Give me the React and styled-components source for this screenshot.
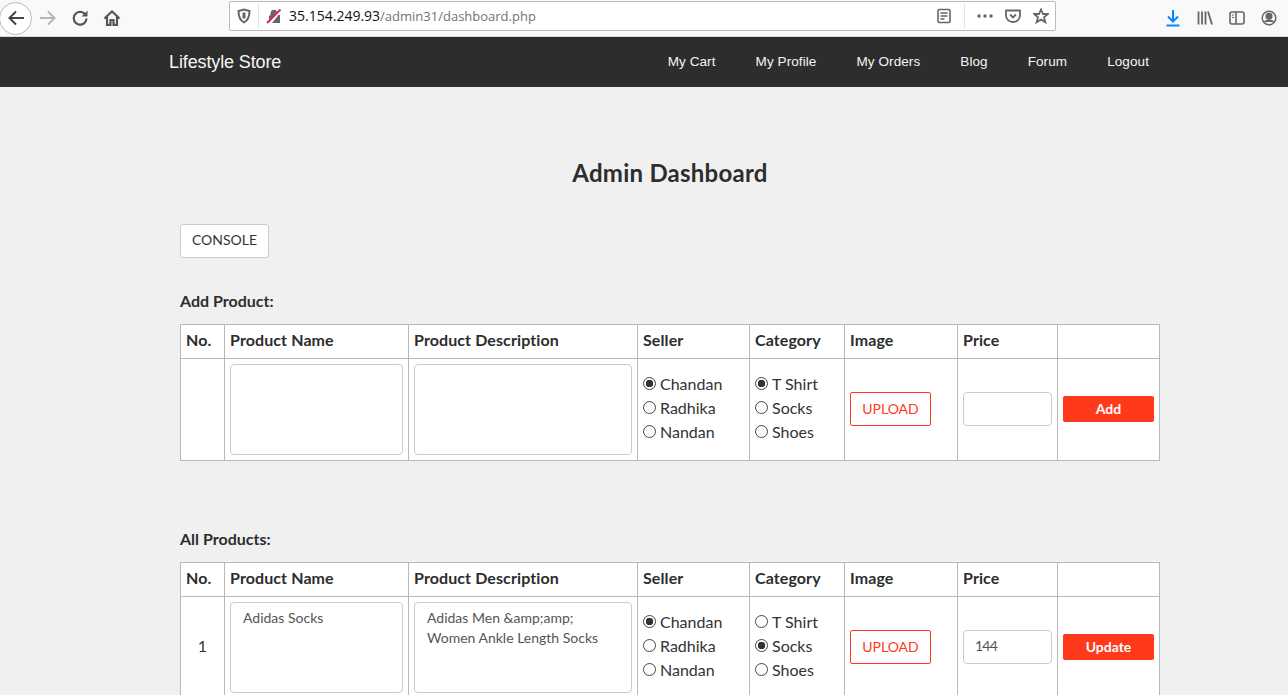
import React from 'react'
import styled, { createGlobalStyle } from 'styled-components'

const GlobalStyle = createGlobalStyle`
    html, body {
        margin: 0;
        height: 100%;
        overflow: hidden;
        background: #f0f0f0;
        font-family: Lato, "Liberation Sans", sans-serif;
        color: #333;
    }
`

const columns = [44, 184, 229, 112, 95, 113, 100, 102]
const headings = ['No.', 'Product Name', 'Product Description', 'Seller', 'Category', 'Image', 'Price', '']
const sellers = ['Chandan', 'Radhika', 'Nandan']
const categories = ['T Shirt', 'Socks', 'Shoes']

const RadioGroup = ({ name, options, selected }) => (
    <Radios>
        {options.map((option) => (
            <RadioRow key={option}>
                <Radio type="radio" name={name} defaultChecked={option === selected} />
                {option}
            </RadioRow>
        ))}
    </Radios>
)

const ProductTable = ({ id, no, name, description, seller, category, price, action }) => (
    <Table>
        <colgroup>
            {columns.map((width, index) => <col key={index} width={width} />)}
        </colgroup>
        <thead>
            <tr>
                {headings.map((heading, index) => <Th key={index}>{heading}</Th>)}
            </tr>
        </thead>
        <tbody>
            <tr>
                <NoCell>{no}</NoCell>
                <Td><TextBox defaultValue={name} /></Td>
                <Td><TextBox defaultValue={description} /></Td>
                <ControlCell><RadioGroup name={id + '-seller'} options={sellers} selected={seller} /></ControlCell>
                <ControlCell><RadioGroup name={id + '-category'} options={categories} selected={category} /></ControlCell>
                <ControlCell><UploadButton>UPLOAD</UploadButton></ControlCell>
                <ControlCell><PriceInput type="text" defaultValue={price} /></ControlCell>
                <ControlCell><ActionButton>{action}</ActionButton></ControlCell>
            </tr>
        </tbody>
    </Table>
)

const App = () => {
    return (
        <>
            <GlobalStyle />
            <BrowserBar>
                <NavIcons>
                    <BackCircle>
                        <svg width="18" height="18" viewBox="0 0 18 18" fill="none" stroke="#444" strokeWidth="2">
                            <path d="M17 9H2.5M9 2.5L2.5 9L9 15.5" />
                        </svg>
                    </BackCircle>
                    <IconSlot>
                        <svg width="18" height="18" viewBox="0 0 18 18" fill="none" stroke="#b5b5b5" strokeWidth="2">
                            <path d="M1 9h14.5M9 2.5L15.5 9L9 15.5" />
                        </svg>
                    </IconSlot>
                    <IconSlot>
                        <svg width="18" height="18" viewBox="0 0 18 18" fill="none" stroke="#555" strokeWidth="2.2">
                            <path d="M15.5 9.5A6.4 6.4 0 1 1 13 4.2L15 6.3" />
                            <path d="M16.5 1.5V7.5H10.5" fill="#555" stroke="none" />
                        </svg>
                    </IconSlot>
                    <IconSlot>
                        <svg width="18" height="18" viewBox="0 0 18 18" fill="none" stroke="#555" strokeWidth="2.2">
                            <path d="M1.5 9.5L9 2.5L16.5 9.5M4 7.5V15.8H7.5V11H10.5V15.8H14V7.5" />
                        </svg>
                    </IconSlot>
                </NavIcons>
                <UrlBar>
                    <svg width="16" height="16" viewBox="0 0 16 16" fill="none" stroke="#666" strokeWidth="2">
                        <path d="M2.5 3L8 1.5L13.5 3C13.5 8 12.5 12 8 14.5C3.5 12 2.5 8 2.5 3Z" />
                        <path d="M8 4.5V10.5" strokeWidth="3" />
                    </svg>
                    <UrlDivider />
                    <svg width="16" height="16" viewBox="0 0 16 16">
                        <path d="M3 15V7.5H4.5V5a3.5 3.5 0 0 1 6.5-1.5L3 15ZM14 7V15H6L12.5 7Z" fill="#666" />
                        <path d="M1 15L14.5 1.5" stroke="#e22850" strokeWidth="2" />
                    </svg>
                    <UrlText>35.154.249.93<UrlPath>/admin31/dashboard.php</UrlPath></UrlText>
                    <UrlActions>
                        <svg width="16" height="16" viewBox="0 0 16 16" fill="none" stroke="#666" strokeWidth="1.6">
                            <rect x="2" y="1.5" width="12" height="13" rx="1.5" />
                            <path d="M4.5 5h7M4.5 8h7M4.5 11h4" />
                        </svg>
                        <ActionDivider />
                        <Dots>
                            <svg width="16" height="4" viewBox="0 0 16 4" fill="#666">
                                <circle cx="2" cy="2" r="1.7" /><circle cx="8" cy="2" r="1.7" /><circle cx="14" cy="2" r="1.7" />
                            </svg>
                        </Dots>
                        <svg width="16" height="16" viewBox="0 0 16 16" fill="none" stroke="#666" strokeWidth="1.8">
                            <path d="M1 2.5H15V7.5A7 6.5 0 0 1 1 7.5Z" />
                            <path d="M5 6.5L8 9.5L11 6.5" />
                        </svg>
                        <svg width="16" height="16" viewBox="0 0 16 16" fill="none" stroke="#666" strokeWidth="1.8">
                            <path d="M8 1.5L10 6H14.8L11 9.2L12.4 14.3L8 11.5L3.6 14.3L5 9.2L1.2 6H6Z" />
                        </svg>
                    </UrlActions>
                </UrlBar>
                <ToolIcons>
                    <svg width="16" height="18" viewBox="0 0 16 18" fill="none" stroke="#0a84ff" strokeWidth="2">
                        <path d="M8 1V12M3 7.5L8 12.5L13 7.5M1.5 16.5H14.5" />
                    </svg>
                    <svg width="16" height="16" viewBox="0 0 16 16" fill="none" stroke="#666" strokeWidth="1.8">
                        <path d="M1.5 1.5V14.5M5 1.5V14.5M8.5 1.5V14.5M11 1.5L15 14.5" />
                    </svg>
                    <svg width="16" height="14" viewBox="0 0 16 14" fill="none" stroke="#666" strokeWidth="1.6">
                        <rect x="1" y="1" width="14" height="12" rx="2" />
                        <path d="M7 1V13" />
                        <path d="M3 4H5M3 6.5H5" strokeWidth="1.2" />
                    </svg>
                    <svg width="16" height="16" viewBox="0 0 16 16" fill="none" stroke="#666" strokeWidth="1.5">
                        <circle cx="8" cy="8" r="6.8" />
                        <circle cx="8" cy="6.3" r="2.8" fill="#666" />
                        <path d="M3.5 12C5 9.8 11 9.8 12.5 12" fill="#666" />
                    </svg>
                </ToolIcons>
            </BrowserBar>
            <Navbar>
                <Brand>Lifestyle Store</Brand>
                <NavLinks>
                    <NavLink>My Cart</NavLink>
                    <NavLink>My Profile</NavLink>
                    <NavLink>My Orders</NavLink>
                    <NavLink>Blog</NavLink>
                    <NavLink>Forum</NavLink>
                    <NavLink>Logout</NavLink>
                </NavLinks>
            </Navbar>
            <Content>
                <Title>Admin Dashboard</Title>
                <ConsoleButton>CONSOLE</ConsoleButton>
                <SectionLabel>Add Product:</SectionLabel>
                <ProductTable id="add" seller="Chandan" category="T Shirt" action="Add" />
                <SectionLabel $spaced>All Products:</SectionLabel>
                <ProductTable
                    id="row1"
                    no="1"
                    name="Adidas Socks"
                    description={'Adidas Men &amp;amp;\nWomen Ankle Length Socks'}
                    seller="Chandan"
                    category="Socks"
                    price="144"
                    action="Update"
                />
            </Content>
        </>
    )
}

export default App

const BrowserBar = styled.div`
    height: 36px;
    background: #f9f9fa;
    border-bottom: 1px solid #d8d8d8;
    display: flex;
    align-items: center;
    box-sizing: content-box;
`
const NavIcons = styled.div`
    display: flex;
    align-items: center;
    width: 229px;
`
const BackCircle = styled.div`
    width: 33px;
    height: 33px;
    margin-left: -1px;
    border: 1px solid #b8b8b8;
    border-radius: 50%;
    background: #fff;
    box-sizing: border-box;
    display: flex;
    justify-content: center;
    align-items: center;
`
const IconSlot = styled.div`
    width: 32px;
    display: flex;
    justify-content: center;
`
const UrlBar = styled.div`
    width: 827px;
    height: 30px;
    margin-top: -5px;
    box-sizing: border-box;
    background: #fff;
    border: 1px solid #bdbdbd;
    border-radius: 2px;
    display: flex;
    align-items: center;
    padding: 0 6px;
`
const UrlDivider = styled.div`
    width: 1px;
    height: 24px;
    background: #e4e4e4;
    margin: 0 7px 0 6px;
`
const ActionDivider = styled(UrlDivider)`
    margin: 0;
`
const UrlText = styled.div`
    margin-left: 7px;
    font-family: "Open Sans", "Liberation Sans", sans-serif;
    font-size: 14px;
    color: #111;
    white-space: nowrap;
`
const UrlPath = styled.span`
    font-size: 13px;
    color: #737373;
`
const UrlActions = styled.div`
    margin-left: auto;
    display: flex;
    align-items: center;
    gap: 12px;
`
const Dots = styled.div`
    display: flex;
    align-items: center;
`
const ToolIcons = styled.div`
    display: flex;
    align-items: center;
    gap: 16px;
    margin-left: auto;
    padding-right: 11px;
`
const Navbar = styled.div`
    height: 50px;
    background: #2d2d2d;
    display: flex;
    align-items: center;
    padding: 0 139px 0 169px;
`
const Brand = styled.div`
    font-family: "Liberation Sans", sans-serif;
    font-size: 18px;
    letter-spacing: -0.12px;
    color: #f5f5f5;
`
const NavLinks = styled.div`
    margin-left: auto;
    margin-top: -2px;
    display: flex;
    gap: 40px;
`
const NavLink = styled.a`
    font-family: "Liberation Sans", sans-serif;
    font-size: 13.5px;
    letter-spacing: 0.09px;
    color: #f5f5f5;
`
const Content = styled.div`
    width: 980px;
    margin-left: 180px;
`
const Title = styled.h1`
    margin: 0;
    padding-top: 71px;
    font-size: 24px;
    line-height: 30px;
    font-weight: 700;
    letter-spacing: 0.25px;
    text-align: center;
    color: #2d2d2d;
`
const ConsoleButton = styled.button`
    display: block;
    margin-top: 36px;
    width: 89px;
    height: 34px;
    background: #fff;
    border: 1px solid #ccc;
    border-radius: 3px;
    font-family: inherit;
    font-size: 14px;
    color: #333;
    padding: 0 0 4px;
`
const SectionLabel = styled.div`
    margin-top: ${(props) => (props.$spaced ? '68px' : '33px')};
    margin-bottom: 13px;
    font-size: 16px;
    line-height: 20px;
    font-weight: 700;
    color: #2d2d2d;
`
const Table = styled.table`
    width: 980px;
    table-layout: fixed;
    border-collapse: collapse;
    background: #fff;
`
const Th = styled.th`
    height: 29px;
    padding: 0 5px 4px;
    border: 1px solid #b9b9b9;
    font-size: 16px;
    font-weight: 700;
    letter-spacing: 0.1px;
    text-align: left;
    color: #2d2d2d;
`
const Td = styled.td`
    padding: 5px;
    border: 1px solid #b9b9b9;
    vertical-align: middle;
`
const ControlCell = styled(Td)`
    padding-bottom: 7px;
`
const NoCell = styled(Td)`
    padding-bottom: 9px;
    text-align: center;
    font-size: 16px;
`
const TextBox = styled.textarea`
    display: block;
    width: 100%;
    height: 91px;
    box-sizing: border-box;
    padding: 5px 12px;
    border: 1px solid #ccc;
    border-radius: 4px;
    resize: none;
    font-family: inherit;
    font-size: 14px;
    line-height: 20px;
    color: #555;
    overflow: hidden;
`
const Radios = styled.div`
    display: flex;
    flex-direction: column;
    margin-bottom: 2px;
`
const RadioRow = styled.label`
    display: flex;
    align-items: center;
    height: 24px;
    font-size: 16px;
    color: #333;
`
const Radio = styled.input`
    appearance: none;
    width: 13px;
    height: 13px;
    margin: 0 4px 0 0;
    border: 1px solid #444;
    border-radius: 50%;
    background: #fff;
    flex: none;
    &:checked {
        background: radial-gradient(circle, #333 0 3.5px, #fff 4px);
    }
`
const UploadButton = styled.button`
    display: block;
    width: 81px;
    height: 34px;
    padding: 0;
    background: #fff;
    border: 1px solid #ff3a1c;
    border-radius: 2px;
    font-family: inherit;
    font-size: 14px;
    color: #ff3a1c;
`
const PriceInput = styled.input`
    display: block;
    width: 89px;
    height: 34px;
    box-sizing: border-box;
    padding: 5px 11px 7px;
    border: 1px solid #ccc;
    border-radius: 4px;
    font-family: inherit;
    font-size: 14px;
    letter-spacing: -0.8px;
    color: #555;
`
const ActionButton = styled.button`
    display: block;
    width: 91px;
    height: 26px;
    padding: 0;
    background: #ff3a1c;
    border: none;
    border-radius: 2px;
    font-family: inherit;
    font-size: 14px;
    font-weight: 700;
    color: #fff;
`
